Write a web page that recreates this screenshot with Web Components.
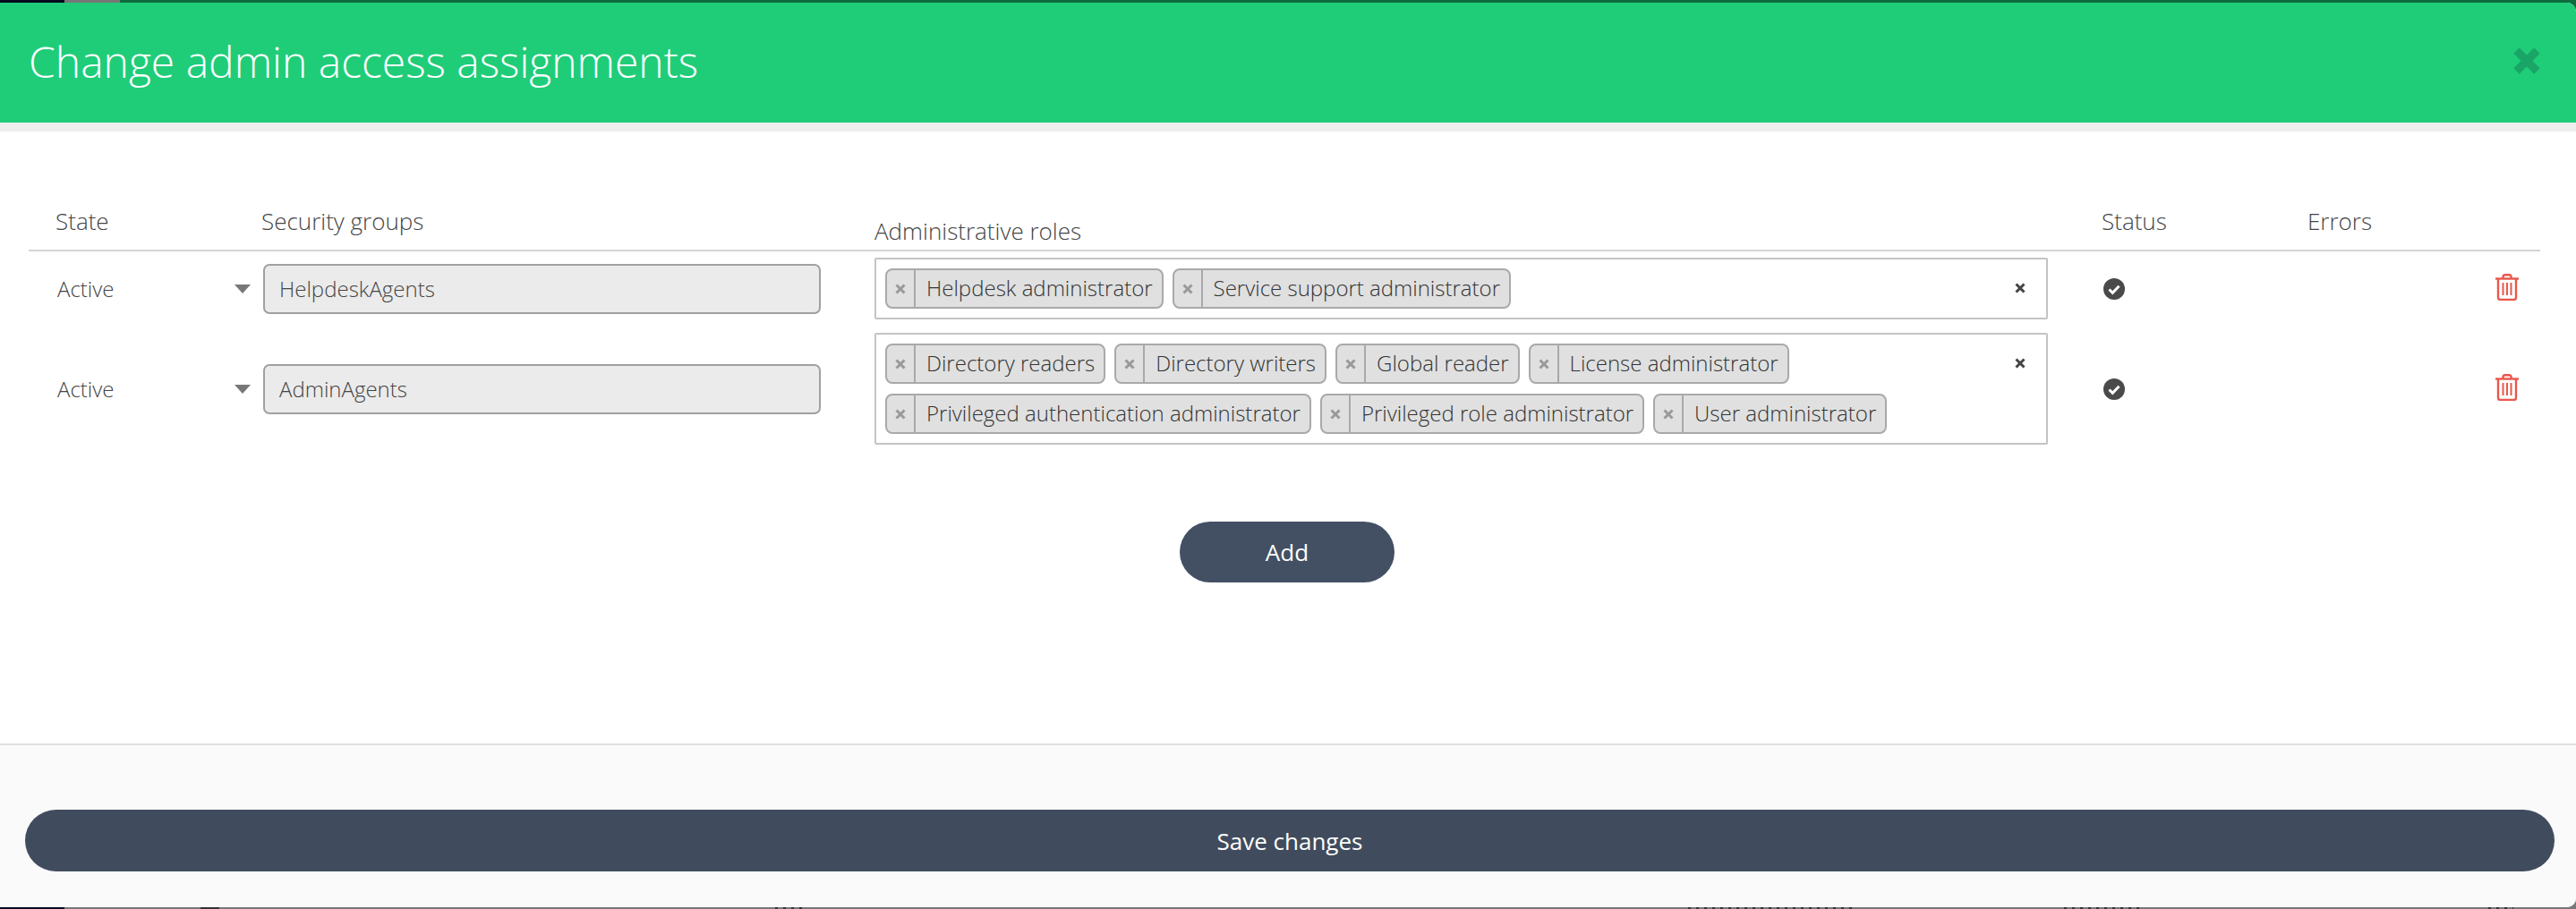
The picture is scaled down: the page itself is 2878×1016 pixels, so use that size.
<!DOCTYPE html>
<html>
<head>
<meta charset="utf-8">
<title>Change admin access assignments</title>
<style>
html, body { margin: 0; padding: 0; height: 100%; }
body { width: 2878px; height: 1016px; overflow: hidden; font-family: "Open Sans", sans-serif; color: #444; }
</style>
</head>
<body>
<admin-modal heading="Change admin access assignments">
  <table-head slot="head"></table-head>
  <assign-row group="HelpdeskAgents" roles="Helpdesk administrator|Service support administrator"></assign-row>
  <assign-row group="AdminAgents" roles="Directory readers|Directory writers|Global reader|License administrator|Privileged authentication administrator|Privileged role administrator|User administrator"></assign-row>
  <pill-button slot="add" style="width:240px;height:68px;background:#435063">Add</pill-button>
  <pill-button slot="save" style="height:69px">Save changes</pill-button>
</admin-modal>

<script>
const ROW_COLUMNS = '262px 683px 1372px 230px 209px 50px';

class PillButton extends HTMLElement {
  constructor() {
    super();
    this.attachShadow({mode: 'open'}).innerHTML = `
<style>
:host { display: flex; align-items: center; justify-content: center; background: #404c5e; color: #fff; border-radius: 36px; font-size: 26px; font-weight: 400; cursor: pointer; }
</style>
<slot></slot>`;
  }
}
customElements.define('pill-button', PillButton);

class RoleChip extends HTMLElement {
  constructor() {
    super();
    this.attachShadow({mode: 'open'}).innerHTML = `
<style>
:host { display: inline-flex; box-sizing: border-box; height: 45px; background: #e0e0e0; border: 2px solid #a9a9a9; border-radius: 8px; font-size: 24px; font-weight: 300; line-height: 40px; color: #333; white-space: nowrap; }
.x { display: flex; align-items: center; justify-content: center; width: 30px; border-right: 2px solid #a9a9a9; }
.label { padding: 0 10px 0 12px; }
</style>
<span class="x"><svg width="12" height="12" viewBox="0 0 12 12"><path d="M1.500 1.500l9 9M10.500 1.500l-9 9" stroke="#999" stroke-width="3"/></svg></span>
<span class="label"><slot></slot></span>`;
  }
}
customElements.define('role-chip', RoleChip);

class RoleSelect extends HTMLElement {
  constructor() {
    super();
    this.attachShadow({mode: 'open'}).innerHTML = `
<style>
:host { display: flex; box-sizing: border-box; position: relative; border: 2px solid #c4c4c4; border-radius: 2px; padding: 10px 50px 10px 10px; background: #fff; }
.chips { display: flex; flex-wrap: wrap; gap: 11px 10px; }
.clear { position: absolute; top: 26px; right: 23px; line-height: 0; }
</style>
<div class="chips"><slot></slot></div>
<span class="clear"><svg width="12" height="12" viewBox="0 0 12 12"><path d="M1.500 1.500l9 9M10.500 1.500l-9 9" stroke="#444" stroke-width="3"/></svg></span>`;
  }
}
customElements.define('role-select', RoleSelect);

class TableHead extends HTMLElement {
  constructor() {
    super();
    this.attachShadow({mode: 'open'}).innerHTML = `
<style>
:host { display: grid; grid-template-columns: ${ROW_COLUMNS}; align-items: end; border-bottom: 2px solid #d3d3d3; height: 52px; padding-bottom: 14px; font-size: 26px; font-weight: 300; color: #444; line-height: 36px; }
.state { padding-left: 30px; }
.shift { margin-left: -2px; }
.roles { position: relative; top: 11px; }
.near { margin-left: -1px; }
</style>
<span class="state">State</span>
<span class="shift">Security groups</span>
<span class="roles">Administrative roles</span>
<span class="near">Status</span>
<span class="near">Errors</span>
<span></span>`;
  }
}
customElements.define('table-head', TableHead);

class AssignRow extends HTMLElement {
  constructor() {
    super();
    this.attachShadow({mode: 'open'}).innerHTML = `
<style>
:host { display: grid; grid-template-columns: ${ROW_COLUMNS}; align-items: center; font-size: 24px; color: #444; }
.state { display: flex; align-items: center; justify-content: space-between; padding: 0 14px 0 32px; font-weight: 300; }
.arrow { width: 0; height: 0; border-left: 9px solid transparent; border-right: 9px solid transparent; border-top: 10px solid #777; }
.group-cell { padding-right: 60px; }
.group { box-sizing: border-box; height: 56px; background: #ebebeb; border: 2px solid #a0a0a0; border-radius: 7px; padding: 0 16px; font-size: 24px; font-weight: 300; line-height: 52px; }
.select-cell { padding-right: 61px; }
.check { line-height: 0; }
.trash { line-height: 0; position: relative; top: -2px; }
</style>
<div class="state"><span>Active</span><span class="arrow"></span></div>
<div class="group-cell"><div class="group"></div></div>
<div class="select-cell"><role-select></role-select></div>
<div class="check"><svg width="26" height="26" viewBox="0 0 26 26"><circle cx="13" cy="13" r="12" fill="#4a4a4a"/><path d="M7.500 13.500l3.800 3.800 7.200-7.600" fill="none" stroke="#fff" stroke-width="3"/></svg></div>
<div></div>
<div class="trash"><svg width="26" height="30" viewBox="0 0 26 30" fill="none" stroke="#e9574c" stroke-width="2.400"><path d="M0 5.500h26"/><path d="M8.500 5V3a1.800 1.800 0 0 1 1.800-1.800h5.400A1.800 1.800 0 0 1 17.500 3v2"/><path d="M3 6v20.500a2.500 2.500 0 0 0 2.500 2.500h15a2.500 2.500 0 0 0 2.500-2.500V6"/><path d="M8.500 10v14M13 10v14M17.500 10v14" stroke-width="2"/></svg></div>`;
  }
  connectedCallback() {
    this.shadowRoot.querySelector('.group').textContent = this.getAttribute('group');
    const select = this.shadowRoot.querySelector('role-select');
    select.textContent = '';
    this.getAttribute('roles').split('|').forEach((role) => {
      const chip = document.createElement('role-chip');
      chip.textContent = role;
      select.append(chip);
    });
  }
}
customElements.define('assign-row', AssignRow);

class AdminModal extends HTMLElement {
  constructor() {
    super();
    this.attachShadow({mode: 'open'}).innerHTML = `
<style>
:host { display: flex; flex-direction: column; width: 2878px; height: 1016px; background: linear-gradient(#0e6b3f 50%, #777 50%); }
.top { display: flex; flex: 0 0 3px; background: #0e6b3f; }
.top i:nth-child(1) { width: 72px; background: #050a1e; }
.top i:nth-child(2) { width: 62px; background: #777; }
.modal { flex: 1; display: flex; flex-direction: column; background: #fff; border-radius: 0 10px 10px 0; overflow: hidden; }
header { flex: 0 0 134px; display: flex; align-items: center; justify-content: space-between; background: #1fcd79; color: #fff; padding: 0 40px 0 32px; box-sizing: border-box; }
h1 { margin: 0; font-size: 48px; font-weight: 300; position: relative; top: -2px; }
.close { line-height: 0; position: relative; top: -2px; }
.band { flex: 0 0 10px; background: #eee; }
.body { flex: 1; padding: 66px 40px 0 32px; display: flex; flex-direction: column; }
.rows { display: flex; flex-direction: column; gap: 15px; margin-top: 7px; }
.add { display: flex; justify-content: center; margin-top: 86px; padding-left: 6px; }
footer { flex: 0 0 181px; background: #fafafa; border-top: 2px solid #e0e0e0; padding: 72px 24px 40px 28px; box-sizing: border-box; }
.bottom { flex: 0 0 2px; display: flex; background: #777; }
.bottom i { background: repeating-linear-gradient(90deg, #333 0 3px, #777 3px 9px); }
.bottom i:nth-child(1) { width: 72px; background: #050a1e; }
.bottom i:nth-child(2) { width: 21px; margin-left: 152px; background: #333; }
.bottom i:nth-child(3) { width: 34px; margin-left: 621px; }
.bottom i:nth-child(4) { width: 184px; margin-left: 986px; }
.bottom i:nth-child(5) { width: 84px; margin-left: 236px; }
.bottom i:nth-child(6) { width: 28px; margin-left: 390px; }
</style>
<div class="top"><i></i><i></i></div>
<div class="modal">
  <header>
    <h1></h1>
    <span class="close"><svg width="30" height="30" viewBox="0 0 30 30"><path d="M3.500 3.500l23 23M26.500 3.500l-23 23" stroke="#1aa566" stroke-width="9"/></svg></span>
  </header>
  <div class="band"></div>
  <div class="body">
    <slot name="head"></slot>
    <div class="rows"><slot></slot></div>
    <div class="add"><slot name="add"></slot></div>
  </div>
  <footer><slot name="save"></slot></footer>
</div>
<div class="bottom"><i></i><i></i><i></i><i></i><i></i><i></i></div>`;
  }
  connectedCallback() {
    this.shadowRoot.querySelector('h1').textContent = this.getAttribute('heading');
  }
}
customElements.define('admin-modal', AdminModal);
</script>
</body>
</html>
